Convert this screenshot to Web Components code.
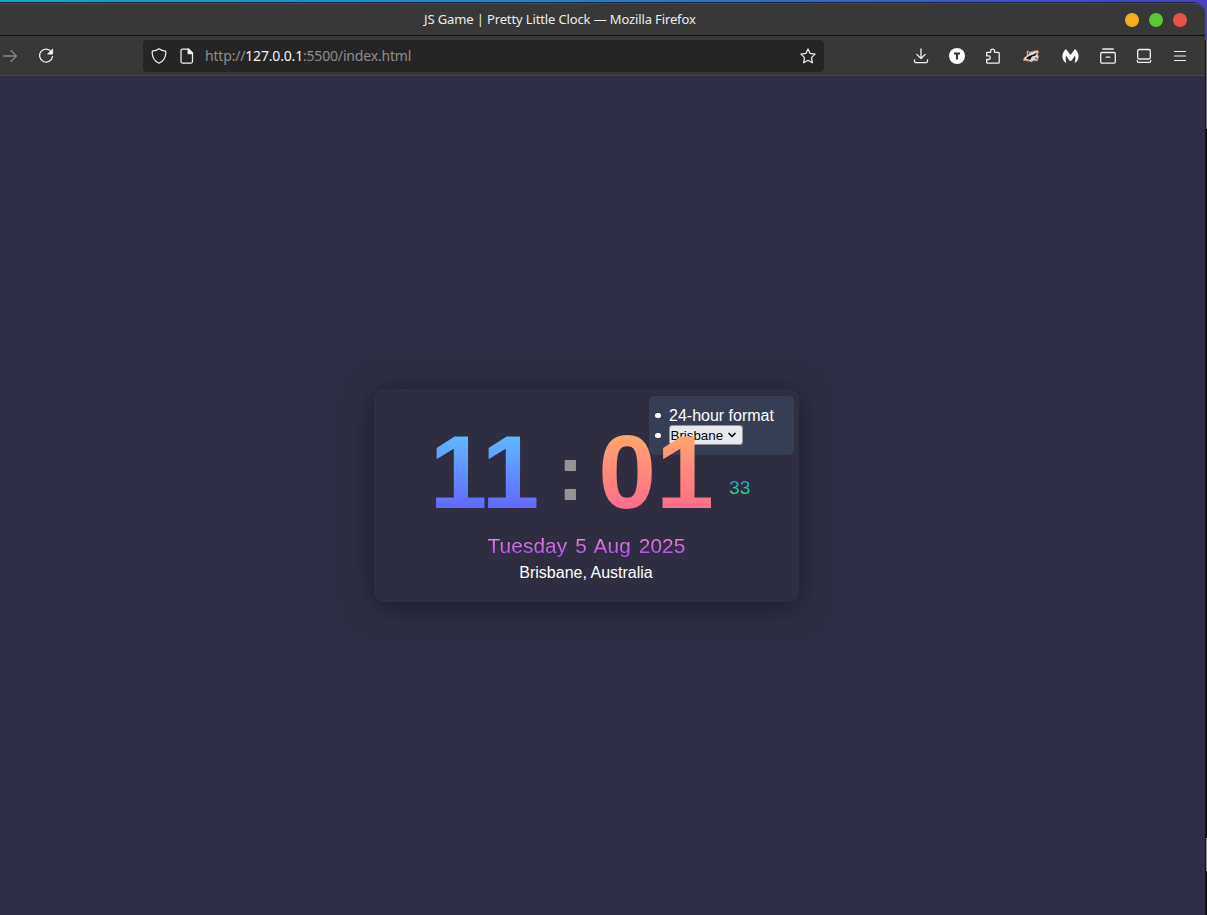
<!DOCTYPE html>
<html lang="en"><head><meta charset="utf-8"><title>JS Game | Pretty Little Clock</title>
<style>html,body{margin:0;width:1207px;height:915px;overflow:hidden;background:#08080c}</style></head>
<body><desktop-view></desktop-view>
<script>
const define=(name,html)=>customElements.define(name,class extends HTMLElement{
  constructor(){super();const t=document.createElement('template');t.innerHTML=html;
    this.attachShadow({mode:'open'}).append(t.content.cloneNode(true));}
});

define('title-bar',`<style>
:host{display:flex;box-sizing:border-box;height:33px;background:#383838;border-top:1px solid #4d4d4d;border-bottom:1px solid #101010;border-radius:0 11px 0 0;align-items:center;justify-content:space-between;padding:0 18px 0 424px;color:#ededed;font:13px/20px "Noto Sans",sans-serif}
.t{white-space:pre;letter-spacing:-.13px;padding-bottom:2px}
.b{display:flex;gap:10px}.b i{width:14px;height:14px;border-radius:50%}
</style><span class="t"><slot></slot></span><span class="b"><i style="background:#f2ae1c"></i><i style="background:#57ca34"></i><i style="background:#ea5349"></i></span>`);

define('address-bar',`<style>
:host{display:flex;box-sizing:border-box;width:681px;height:32px;background:#252525;border-radius:4px;align-items:center;padding:0 8px;font:14px/20px "Noto Sans",sans-serif;color:#8e8e8e}
svg{width:16px;height:16px;fill:none;stroke:#eee;stroke-width:1.25;stroke-linejoin:round;stroke-linecap:round}
.p{margin-left:12px}.u{margin-left:10px;white-space:pre;flex:1;letter-spacing:-.18px}b{font-weight:400;color:#f3f3f3}
</style>
<svg viewBox="0 0 16 16"><path d="M8 .8c2 1.5 4.200 2.100 6.700 2.400.5 5.500-1.800 9.800-6.700 12-4.900-2.200-7.200-6.500-6.700-12C3.800 2.900 6 2.300 8 .8z"/></svg>
<svg class="p" viewBox="0 0 16 16"><path d="M3.500 1h6l4 4v8.500a1.500 1.500 0 0 1-1.500 1.500H3.500A1.500 1.500 0 0 1 2 13.500v-11A1.500 1.500 0 0 1 3.500 1z"/><path d="M9.200 1v4.500h4.300z" fill="#eee"/></svg>
<span class="u">http://<b>127.0.0.1</b>:5500/index.html</span>
<svg viewBox="0 0 16 16"><path d="M8 .9l2.100 4.500 5 .7-3.600 3.500.9 5.200L8 12.300l-4.400 2.500.9-5.200L.9 6.100l5-.7z"/></svg>`);

define('nav-bar',`<style>
:host{display:flex;box-sizing:border-box;height:40px;background:#383838;border-bottom:1px solid #464646;align-items:center;padding:0 16px 0 2px}
svg{width:16px;height:16px;fill:none;stroke:#f1f1f1;stroke-width:1.3;stroke-linecap:round;stroke-linejoin:round;flex:none;overflow:visible}
.r{margin:0 89px 0 20px}.x{display:flex;align-items:center;margin-left:88.500px;flex:1}
.x svg+svg{margin-left:var(--g,20px)}
</style>
<svg viewBox="0 0 16 16" style="stroke:#858585"><path d="M1.500 8h13M9 2.500 14.500 8 9 13.500"/></svg>
<svg class="r" viewBox="0 0 16 16"><path d="M13.500 4A6.500 6.500 0 1 0 14.500 8.500"/><path d="M14.600 1.500V6h-4.600z" fill="#f1f1f1" stroke-width="1"/></svg>
<slot></slot>
<div class="x">
<svg viewBox="0 0 16 16"><path d="M8 .8v9.500M3.800 6.400 8 10.500l4.200-4.100M1.500 11.800v1.400A1.500 1.500 0 0 0 3 14.700h10a1.500 1.500 0 0 0 1.500-1.500v-1.400"/></svg>
<svg viewBox="0 0 16 16"><circle cx="8" cy="8" r="8" fill="#fff" stroke="none"/><path d="M5 5.500h6M8 5.500v6" stroke="#333" stroke-width="2" stroke-linecap="butt"/></svg>
<svg viewBox="0 0 16 16" style="--g:20.500px"><path d="M1.700 4.300h4V3a1.900 1.900 0 0 1 3.800 0v1.300h3.700a1 1 0 0 1 1 1V14.200a1 1 0 0 1-1 1H2.700a1 1 0 0 1-1-1V11.500H3.500a1.800 1.800 0 0 0 0-3.600H1.700z"/></svg>
<svg viewBox="0 0 18 16" style="width:18px;--g:21px"><path d="M1.500 12.500 2 10 5 7.500 5 2.800l3 1.500L12 3l4-.5.5 1.500-1 2.500 1.200 2-1.500 4.500L11 12.500 10 13.900 6.500 13z" fill="#ddd8d3" stroke="#c87945" stroke-width=".9" stroke-dasharray="2 .9"/><path d="M4 10.500 7 8l4.500-1.500 3.300-2-1.200 3L10 8.500l-2 3.500zM6 4l1.500 1.500L6 6.500zM13 9.500l2 .5-1 1.500z" fill="#111" stroke="none"/></svg>
<svg viewBox="0 0 17 16" style="width:17px;--g:21.500px"><path d="M4 1 8.500 7 13 1C16 3.500 17.200 7.500 16.300 10.500c-.5 2.100-1.900 3.700-3.700 4.500.9-2.800 1-5 .4-7.500L9.500 12.800h-2L4 7.500c-.6 2.500-.5 4.700.4 7.500C2.600 14.200 1.200 12.600.7 10.500-.2 7.500 1 3.500 4 1z" fill="#fff" stroke="none"/></svg>
<svg viewBox="0 0 16 16" style="--g:21.500px"><path d="M2.800 1h10.400M2 4.500h12a1.300 1.300 0 0 1 1.300 1.300v8a1.300 1.300 0 0 1-1.300 1.300H2a1.300 1.300 0 0 1-1.300-1.300v-8A1.300 1.300 0 0 1 2 4.500zM6.200 9.200h3.600"/></svg>
<svg viewBox="0 0 16 16"><rect x="1.700" y="1.500" width="12.600" height="9.500" rx="1.500"/><path d="M1.300 12.300v.7a1.300 1.300 0 0 0 1.300 1.300h10.800a1.300 1.300 0 0 0 1.300-1.300v-.7"/></svg>
<svg viewBox="0 0 16 16"><path d="M2.500 3.500h11M2.500 8h11M2.500 12.500h11" stroke-width="1.200"/></svg>
</div>`);

define('clock-settings',`<style>
:host{display:block;box-sizing:border-box;position:absolute;top:7px;right:5px;width:145px;height:59px;background:#373e54;border-radius:5px;padding:9px 0 0 6px;color:#fff;font:16px/19px "Liberation Sans",sans-serif}
div{display:flex;align-items:center;height:20px;gap:8px}
div::before{content:"";width:5.500px;height:5.500px;border-radius:50%;background:#fff;margin:1px .5px 0 0}
.s{box-sizing:border-box;display:flex;align-items:center;width:74px;height:20px;background:#e9e9ed;border:1px solid #8f8f9d;border-radius:3px;color:#000;font-size:13.333px;padding-left:.5px}
svg{width:10px;height:8px;margin-left:4px;fill:none;stroke:#000;stroke-width:1.500}
</style><div><span>24-hour format</span></div><div><span class="s">Brisbane<svg viewBox="0 0 10 8"><path d="M1.500 2 5 5.500 8.500 2"/></svg></span></div>`);

define('time-display',`<style>
:host{display:flex;position:relative;z-index:1;height:104px;font:700 104px/104px "Liberation Sans",sans-serif}
span{background-clip:text;-webkit-background-clip:text;color:transparent}
.h{width:110px;background-image:linear-gradient(#5fc3ff,#5fb8ff 15%,#6366ff 87%)}
.c{width:58.500px;display:flex;justify-content:center;color:#949494;font-size:80px;line-height:105px;box-sizing:border-box;padding-left:3px}
.m{width:116px;background-image:linear-gradient(#ffb065,#ffa66b 15%,#ff6b8f 87%)}
.s{font-weight:400;font-size:19.200px;line-height:22px;height:22px;margin:57px 0 0 15px;background-image:linear-gradient(#2f9bd0 10%,#2bdc85 80%)}
</style><span class="h">11</span><div class="c">:</div><span class="m">01</span><span class="s">33</span>`);

define('clock-card',`<style>
:host{display:block;box-sizing:border-box;position:relative;width:425px;height:213px;background:#2e2e40;border-radius:9px;box-shadow:0 4px 30px rgba(13,15,36,.7);padding:31px 0 0;text-align:center;font:16px/18px "Liberation Sans",sans-serif;color:#fff}
time-display{margin-left:55.500px}
.d{display:table;margin:10px auto 0;position:static;font-size:20.800px;line-height:24px;letter-spacing:.1px;word-spacing:2px;color:transparent;background:linear-gradient(#f48ad4 10%,#ad50ee 90%);background-clip:text;-webkit-background-clip:text}
.l{margin:6px 1px 0 0}
</style><clock-settings></clock-settings><time-display></time-display><div class="d">Tuesday 5 Aug 2025</div><div class="l">Brisbane, Australia</div>`);

define('desktop-view',`<style>
:host{display:grid;grid-template-columns:1205px 2px;width:1207px;height:915px;background:linear-gradient(90deg,#11a9c0,#2482c7 45%,#414fc4 85%,#4940c4) 0 0/1207px 40px no-repeat #08080c}
.w{margin-top:2px;border-top:1px solid #17243a;border-radius:0 12px 0 0;height:912px}
main{display:flex;height:839px;background:#2e2f44;overflow:hidden}
clock-card{margin:313px 0 0 374px}
.e{margin-top:40px;background:linear-gradient(90deg,#15151b 1px,transparent 1px),linear-gradient(#77777d 0 89px,#08080c 89px 798px,#98989c 798px 831px,#08080c 831px)}
</style><div class="w"><title-bar>JS Game | Pretty Little Clock — Mozilla Firefox</title-bar><nav-bar><address-bar></address-bar></nav-bar><main><clock-card></clock-card></main></div><div class="e"></div>`);
</script></body></html>
